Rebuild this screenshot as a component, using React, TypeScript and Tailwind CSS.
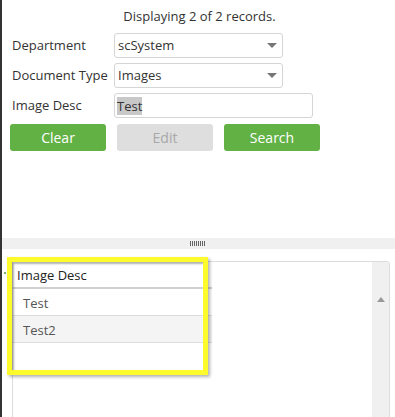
import React from 'react';

const font = { fontFamily: '"Open Sans", "Noto Sans", Arial, sans-serif' };

const Caret = () => (
  <svg width="10" height="6" viewBox="0 0 10 6" className="shrink-0">
    <path d="M0 0 L10 0 L5 5 Z" fill="#777" />
  </svg>
);

const SelectBox = ({ value }: { value: string }) => (
  <div className="w-[169px] h-[25px] border border-[#d5d5d5] rounded-[3px] bg-white flex items-center justify-between pl-[3px] pr-[5px]">
    <span className="text-[13px] text-[#333]">{value}</span>
    <Caret />
  </div>
);

const rows = ['Test', 'Test2'];

export default function App() {
  return (
    <div style={font} className="w-[395px] h-[417px] flex flex-col bg-white border-l-2 border-[#333] overflow-hidden">
      {/* top search panel */}
      <div className="h-[238px] shrink-0 pl-[10px] pt-[7px]">
        <div className="text-center text-[13px] text-[#333] pr-[8px] h-[20px]">Displaying 2 of 2 records.</div>
        <div className="flex flex-col gap-[5px] mt-[6px]">
          <div className="flex items-center">
            <span className="w-[102px] text-[13px] text-[#333]">Department</span>
            <SelectBox value="scSystem" />
          </div>
          <div className="flex items-center">
            <span className="w-[102px] text-[13px] text-[#333] whitespace-nowrap">Document Type</span>
            <SelectBox value="Images" />
          </div>
          <div className="flex items-center">
            <span className="w-[102px] text-[13px] text-[#333]">Image Desc</span>
            <div className="w-[199px] h-[25px] border border-[#d5d5d5] rounded-[3px] flex items-center pl-[2px]">
              <span className="text-[13px] text-[#333] bg-[#c8c8c8] leading-[18px]">Test</span>
            </div>
          </div>
        </div>
        <div className="flex gap-[11px] mt-[6px] -ml-[2px]">
          <button className="w-[96px] h-[27px] rounded-[3px] bg-[#62b145] text-white text-[14px]">Clear</button>
          <button className="w-[96px] h-[27px] rounded-[3px] bg-[#dedede] text-[#a8a8a8] text-[14px]">Edit</button>
          <button className="w-[96px] h-[27px] rounded-[3px] bg-[#62b145] text-white text-[14px]">Search</button>
        </div>
      </div>

      {/* splitter */}
      <div className="h-[11px] shrink-0 bg-[#f0f0f0] flex items-center justify-center">
        <div className="flex gap-[1px] mr-[2px]">
          {Array.from({ length: 8 }).map((_, i) => (
            <div key={i} className="w-[1px] h-[5px] bg-[#666]" />
          ))}
        </div>
      </div>

      {/* results grid */}
      <div className="flex-1 relative pl-[10px] pr-[5px] pt-[12px]">
        <div className="absolute left-[2px] top-[23px] w-[2px] h-[2px] bg-[#7cb36a]" />
        <div className="h-full border-l border-t border-r border-[#dcdcdc] rounded-tr-[4px] flex">
          <div className="flex-1 relative">
            <div className="w-[199px] relative">
              <div className="h-[27px] flex items-center pl-[4px] pt-[2px] text-[13px] text-[#222] border-b-2 border-[#d0d0d0]">Image Desc</div>
              {rows.map((r, i) => (
                <div
                  key={r}
                  className={`h-[27px] flex items-center pl-[10px] pt-[3px] text-[13px] text-[#555] border-b border-[#dcdcdc] ${i === 1 ? 'bg-[#f4f4f4]' : 'bg-white'}`}
                >
                  {r}
                </div>
              ))}
              {/* highlight annotation */}
              <div className="absolute left-[-6px] top-[-5px] w-[201px] h-[118px] border-[5px] border-[#fdfb2c] shadow-[2px_2px_3px_rgba(0,0,0,0.3),inset_2px_2px_2px_rgba(0,0,0,0.3)]" />
            </div>
          </div>
          <div className="w-[17px] bg-[#f0f0f0] flex justify-center pt-[35px] rounded-tr-[4px]">
            <svg width="8" height="5" viewBox="0 0 8 5">
              <path d="M0 5 L4 0 L8 5 Z" fill="#999" />
            </svg>
          </div>
        </div>
      </div>
    </div>
  );
}
